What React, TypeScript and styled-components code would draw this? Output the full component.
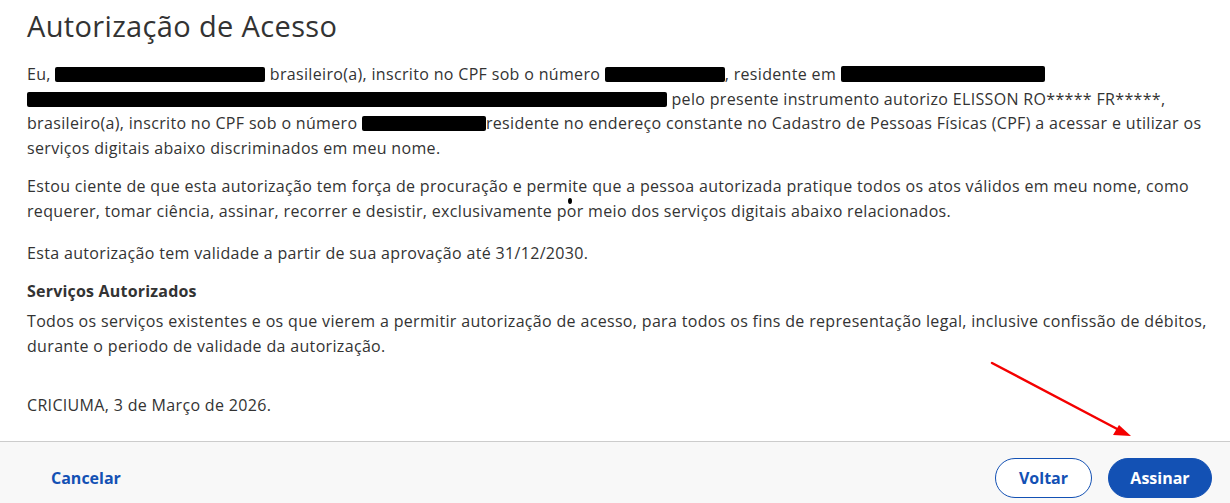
import React from "react";
import styled, { createGlobalStyle } from "styled-components";

const GlobalStyle = createGlobalStyle`
    html, body {
        margin: 0;
        padding: 0;
        background: #fff;
    }
    body {
        font-family: "Open Sans", Lato, sans-serif;
        color: #333333;
    }
`;

const Page = styled.div`
    position: relative;
    width: 1230px;
    height: 503px;
    display: flex;
    flex-direction: column;
    overflow: hidden;
`;

const Content = styled.div`
    flex: 1;
    padding: 8px 12px 0 27px;
`;

const Title = styled.h1`
    margin: 0 0 18px;
    font-size: 29px;
    font-weight: 400;
    line-height: 36px;
    letter-spacing: 0.35px;
    color: #333333;
`;

const Paragraph = styled.p<{ $gap?: number }>`
    margin: 0 0 ${(p) => p.$gap ?? 14}px;
    font-size: 16px;
    line-height: 24.6px;
    letter-spacing: 0.33px;
`;

const Line = styled.span`
    display: block;
    white-space: nowrap;
`;

const Redacted = styled.span<{ $w: number; $h?: number }>`
    display: inline-block;
    width: ${(p) => p.$w}px;
    height: ${(p) => p.$h ?? 15}px;
    background: #000;
    border-radius: 2px;
    vertical-align: -2px;
`;

const Subtitle = styled.h2`
    margin: 0 0 5px;
    font-size: 16px;
    font-weight: 700;
    line-height: 25px;
    letter-spacing: 0.2px;
`;

const Place = styled.p`
    margin: 35px 0 0;
    font-size: 16px;
    line-height: 25px;
    letter-spacing: 0.33px;
`;

const Cursor = styled.span`
    position: absolute;
    left: 568px;
    top: 198px;
    width: 4px;
    height: 6px;
    border-radius: 50%;
    background: #000;
`;

const Footer = styled.footer`
    height: 62px;
    box-sizing: border-box;
    border-top: 1px solid #cccccc;
    background: #f8f8f8;
    display: flex;
    align-items: center;
    padding: 16px 18px 5px 31px;
`;

const TextButton = styled.button`
    border: none;
    background: none;
    padding: 8px 20px;
    font-family: inherit;
    font-size: 16px;
    font-weight: 700;
    color: #1351b4;
    cursor: pointer;
`;

const Actions = styled.div`
    margin-left: auto;
    display: flex;
    gap: 16px;
`;

const PillButton = styled.button<{ $primary?: boolean }>`
    height: 40px;
    min-width: ${(p) => (p.$primary ? 104 : 97)}px;
    padding: 0 20px;
    border-radius: 20px;
    border: 1px solid #1351b4;
    background: ${(p) => (p.$primary ? "#1351b4" : "#fff")};
    color: ${(p) => (p.$primary ? "#fff" : "#1351b4")};
    font-family: inherit;
    font-size: 16px;
    font-weight: 700;
    cursor: pointer;
`;

const Arrow = styled.svg`
    position: absolute;
    left: 985px;
    top: 355px;
    pointer-events: none;
`;

export default function App() {
    return (
        <Page>
            <GlobalStyle />
            <Content>
                <Title>Autorização de Acesso</Title>
                <Paragraph>
                    <Line>
                        Eu, <Redacted $w={210} /> brasileiro(a), inscrito no CPF sob o número <Redacted $w={120} />, residente em{" "}
                        <Redacted $w={204} $h={16} />
                    </Line>
                    <Line>
                        <Redacted $w={640} /> pelo presente instrumento autorizo ELISSON RO***** FR*****,
                    </Line>
                    <Line>
                        brasileiro(a), inscrito no CPF sob o número <Redacted $w={124} />residente no endereço constante no Cadastro
                        de Pessoas Físicas (CPF) a acessar e utilizar os
                    </Line>
                    <Line>serviços digitais abaixo discriminados em meu nome.</Line>
                </Paragraph>
                <Paragraph $gap={17}>
                    <Line>
                        Estou ciente de que esta autorização tem força de procuração e permite que a pessoa autorizada pratique todos
                        os atos válidos em meu nome, como
                    </Line>
                    <Line>
                        requerer, tomar ciência, assinar, recorrer e desistir, exclusivamente por meio dos serviços digitais abaixo
                        relacionados.
                    </Line>
                </Paragraph>
                <Paragraph>Esta autorização tem validade a partir de sua aprovação até 31/12/2030.</Paragraph>
                <Subtitle>Serviços Autorizados</Subtitle>
                <Paragraph $gap={0}>
                    <Line>
                        Todos os serviços existentes e os que vierem a permitir autorização de acesso, para todos os fins de
                        representação legal, inclusive confissão de débitos,
                    </Line>
                    <Line>durante o periodo de validade da autorização.</Line>
                </Paragraph>
                <Place>CRICIUMA, 3 de Março de 2026.</Place>
            </Content>
            <Footer>
                <TextButton>Cancelar</TextButton>
                <Actions>
                    <PillButton>Voltar</PillButton>
                    <PillButton $primary>Assinar</PillButton>
                </Actions>
            </Footer>
            <Cursor />
            <Arrow width="160" height="95" viewBox="0 0 160 95">
                <line x1="7" y1="8" x2="136" y2="76" stroke="#f40000" strokeWidth="2.5" strokeLinecap="round" />
                <polygon points="146,81 128,80 134,70" fill="#f40000" />
            </Arrow>
        </Page>
    );
}
